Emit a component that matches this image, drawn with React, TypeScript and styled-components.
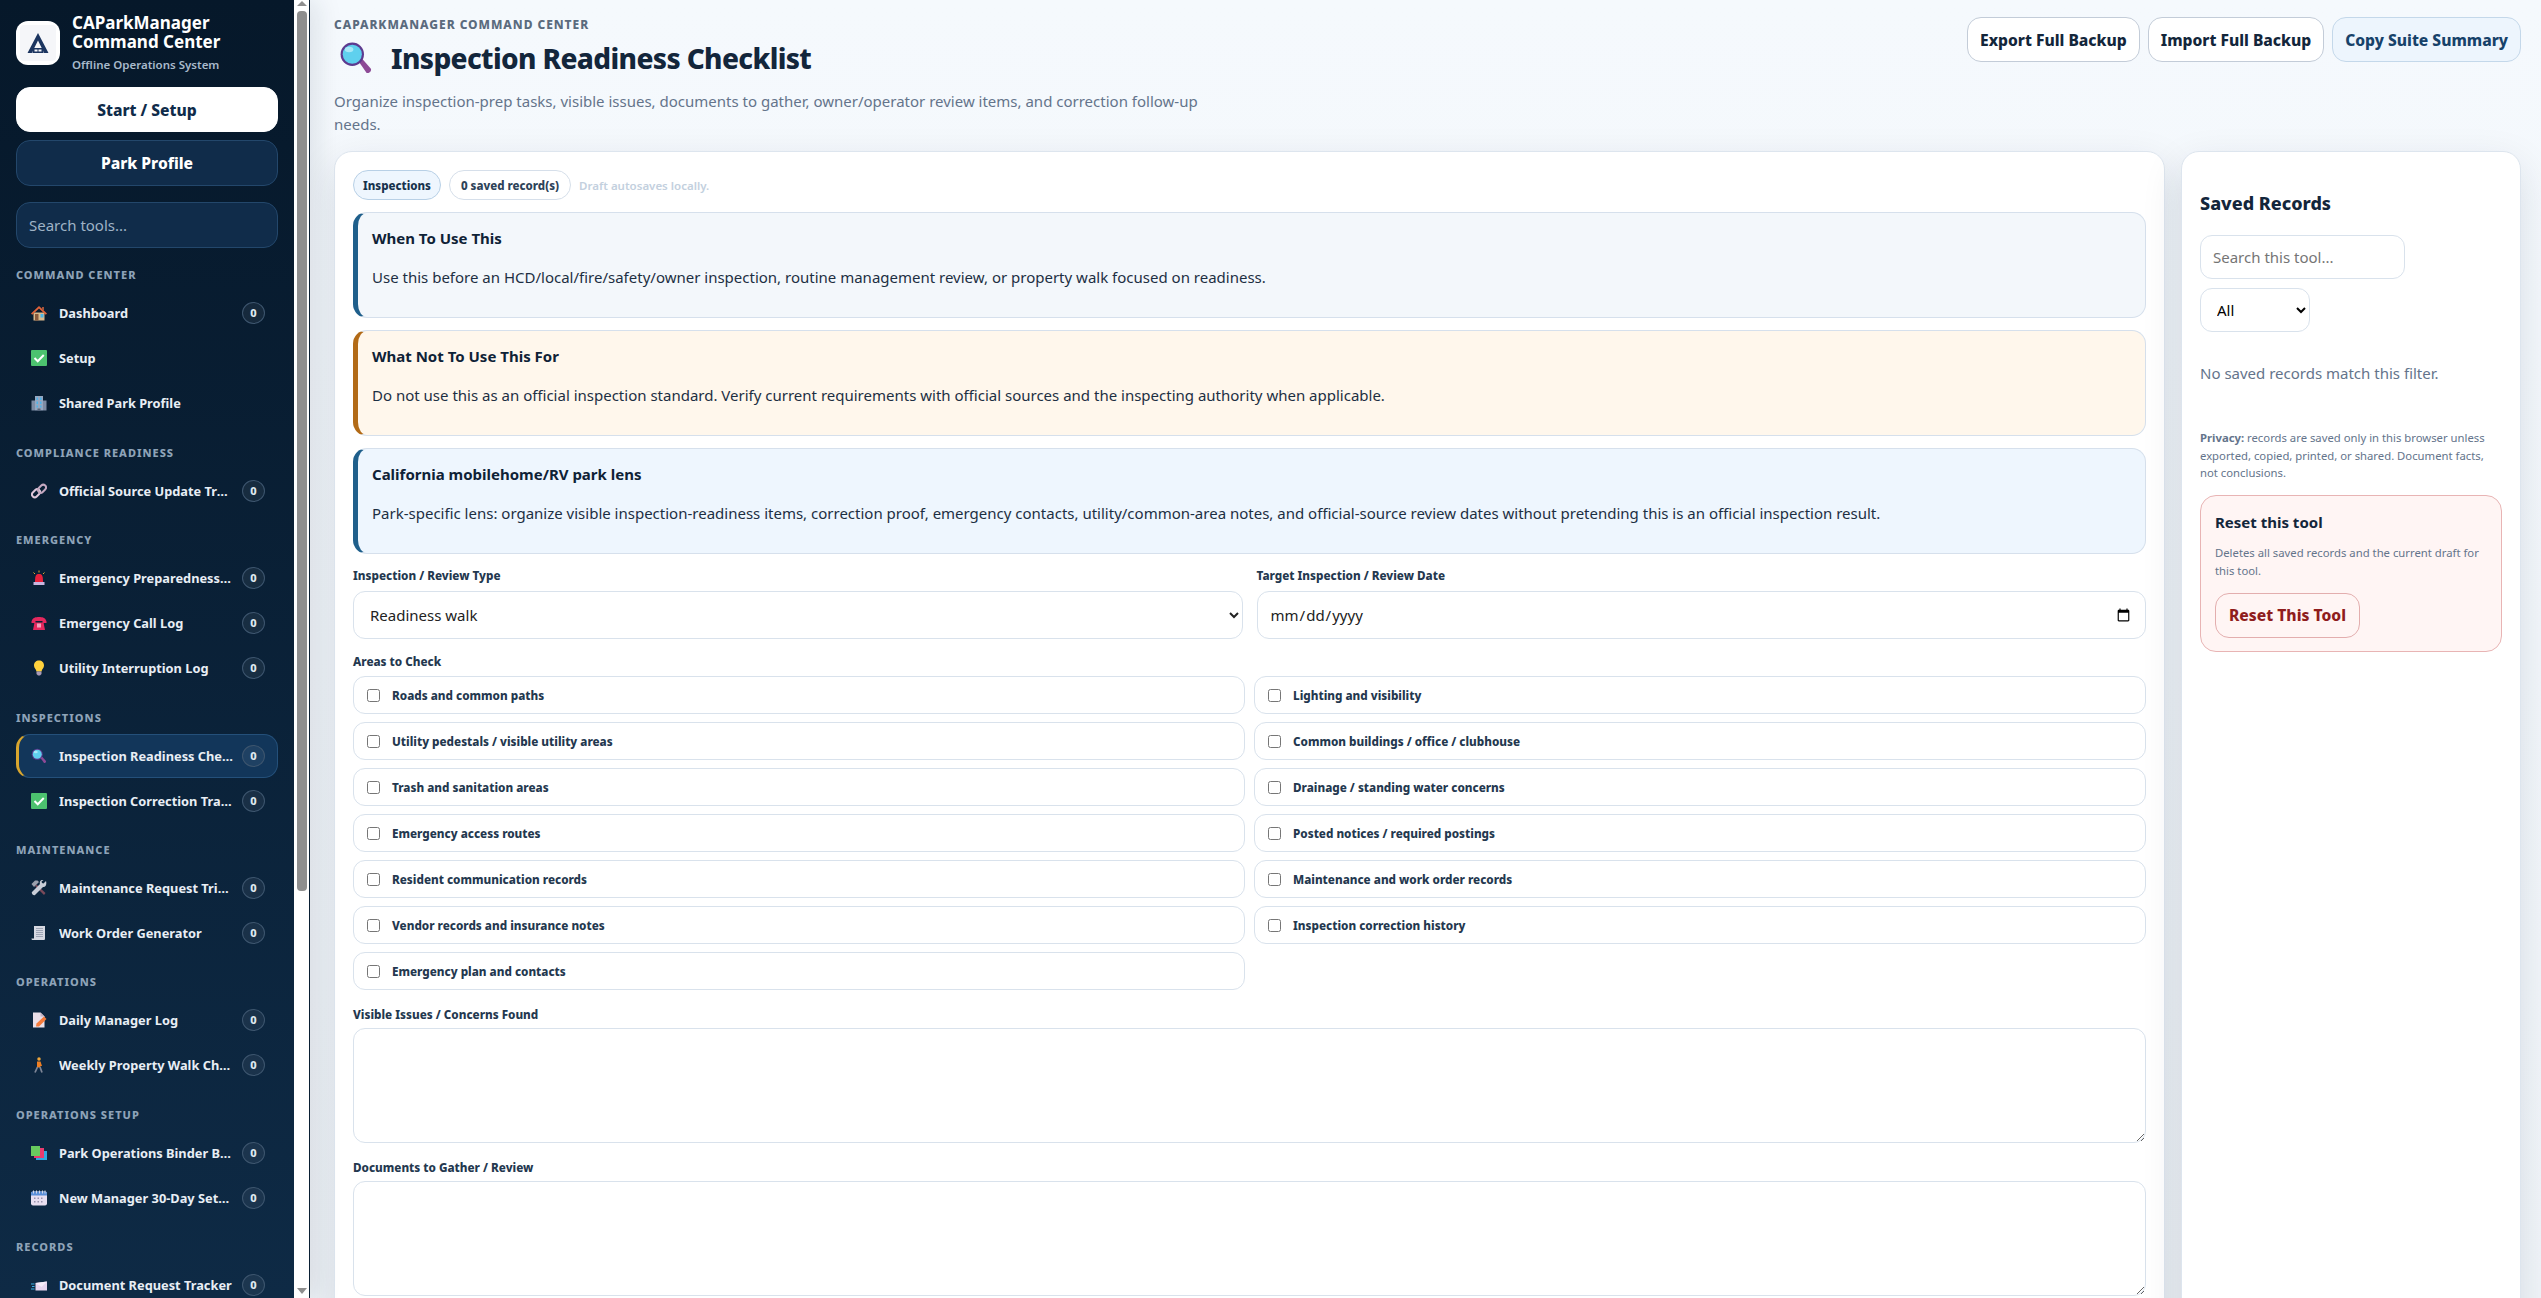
import React from 'react';
import styled, {createGlobalStyle} from 'styled-components';

const GlobalStyle = createGlobalStyle`
  * { box-sizing: border-box; }
  html, body { margin: 0; height: 100%; overflow: hidden; }
  body {
    font-family: "Noto Sans", "Liberation Sans", sans-serif;
    color: #13263b;
    background: #f5f9fd;
  }
  #root { height: 100%; }
`

type IconName = 'house' | 'check' | 'building' | 'link' | 'siren' | 'phone' | 'bulb' | 'lens' | 'tools' | 'receipt' | 'memo' | 'walker' | 'books' | 'calendar' | 'mail';

const Emoji = ({name, size = 16}: {name: IconName; size?: number}) => (
    <svg width={size} height={size} viewBox="0 0 32 32" aria-hidden="true">
        {name === 'house' && <>
            <path d="M5 15h22v16H5z" fill="#d9b98c"/>
            <path d="M16 2 0 17l2.500 2.500L16 7l13.500 12.500L32 17z" fill="#e0633a"/>
            <path d="M22 4h4v8l-4-3.500z" fill="#a5543a"/>
            <path d="M8 18h7v13H8z" fill="#8a5a3c"/>
            <path d="M19 18h6v7h-6z" fill="#49b6e8"/>
        </>}
        {name === 'check' && <>
            <rect x="0" y="0" width="32" height="32" rx="2" fill="#4cc26f"/>
            <path d="m7 16 6.500 6.500L25.500 10" fill="none" stroke="#fff" strokeWidth="4"/>
        </>}
        {name === 'building' && <>
            <path d="M1 11h7v20H1zM24 11h7v20h-7z" fill="#7d8ba3"/>
            <path d="M8 2h16v29H8z" fill="#96a7c0"/>
            <path d="M11 5h3v5h-3zM18 5h3v5h-3zM11 13h3v5h-3zM18 13h3v5h-3zM11 21h3v4h-3zM18 21h3v4h-3z" fill="#4db4ea"/>
            <path d="M13 27h6v4h-6z" fill="#5a6578"/>
        </>}
        {name === 'link' && <>
            <rect x="1" y="15" width="18" height="11" rx="5.500" transform="rotate(-45 10 20.500)" fill="none" stroke="#e0c8dc" strokeWidth="4"/>
            <rect x="13" y="6" width="18" height="11" rx="5.500" transform="rotate(-45 22 11.500)" fill="none" stroke="#c4a8c0" strokeWidth="4"/>
        </>}
        {name === 'siren' && <>
            <path d="M8 24c0-14 2-16 8-16s8 2 8 16z" fill="#e8213b"/>
            <path d="M5 24h22v6H5z" fill="#c8b5e0"/>
            <path d="M16 1v4M5 5l3 3M27 5l-3 3" stroke="#e0a92f" strokeWidth="2"/>
        </>}
        {name === 'phone' && <>
            <path d="M1 13C3 5 10 4 16 4s13 1 15 9v3h-8v-4H9v4H1z" fill="#e4285e"/>
            <path d="M7 15h18l3 15H4z" fill="#e4285e"/>
            <rect x="12" y="17" width="8" height="8" fill="#f2a2bb"/>
        </>}
        {name === 'bulb' && <>
            <path d="M16 1c6 0 10 4 10 10 0 5-4 7-5 12H11c-1-5-5-7-5-12C6 5 10 1 16 1z" fill="#ffd23d"/>
            <path d="M11 23h10v5l-3 3h-4l-3-3z" fill="#a89bb8"/>
        </>}
        {name === 'lens' && <>
            <path d="m19 20 3-3 8 9c1 2-2 5-4 4z" fill="#8d4a96"/>
            <circle cx="12.500" cy="12.500" r="11" fill="#5d3a8f"/>
            <circle cx="12.500" cy="12.500" r="9" fill="#5fd0ee"/>
            <ellipse cx="9.500" cy="8" rx="4" ry="2.500" fill="#a8e8f7"/>
        </>}
        {name === 'tools' && <>
            <path d="M11 9 29 26l-3 4L8 12z" fill="#7a4a5a"/>
            <path d="M1 8 8 1h5l3 3-10 10z" fill="#9aa0ad"/>
            <path d="M30 2l-5 5-3-1-1-3 4-3c-5-1-9 3-7 8L2 24c-2 3 3 8 6 6L24 14c5 1 8-5 6-12z" fill="#c9ced8"/>
        </>}
        {name === 'receipt' && <>
            <path d="M6 2h22v25c0 2-1 3-3 3H4c-2 0-3-1-3-3h5z" fill="#d6d9e2"/>
            <path d="M10 7h14M10 11h14M10 15h14M10 19h14M10 23h14" stroke="#8b93a5" strokeWidth="1.500"/>
        </>}
        {name === 'memo' && <>
            <path d="M4 1h15l8 8v22H4z" fill="#eadfe8"/>
            <path d="M19 1v8h8z" fill="#c3b1c2"/>
            <path d="m10 29 1-6 15-14 5 5-15 15z" fill="#f47b3b"/>
        </>}
        {name === 'walker' && <>
            <circle cx="16" cy="4" r="3.500" fill="#f0a63a"/>
            <path d="M12 9h7l3 9h-3v3h-7z" fill="#ef7f22"/>
            <path d="M13 20 8 31M18 20l4 11" stroke="#7d8596" strokeWidth="3.500"/>
        </>}
        {name === 'books' && <>
            <path d="M10 12h22v18H10z" fill="#2fa6df"/>
            <path d="M6 6h20v20H6z" fill="#e93b6e"/>
            <path d="M0 2h18v20H0z" fill="#68cb5e"/>
        </>}
        {name === 'calendar' && <>
            <rect x="0" y="3" width="32" height="28" rx="4" fill="#e9dff0"/>
            <path d="M0 7a4 4 0 0 1 4-4h24a4 4 0 0 1 4 4v4H0z" fill="#5a8fd8"/>
            <path d="M5 1v6M11 1v6M17 1v6M23 1v6M28 1v6" stroke="#d5d8e6" strokeWidth="2"/>
            <path d="M6 15h3v3H6zM13 15h3v3h-3zM20 15h3v3h-3zM6 22h3v3H6zM13 22h3v3h-3zM20 22h3v3h-3z" fill="#9a93ad"/>
        </>}
        {name === 'mail' && <>
            <path d="M9 12 32 9v18H9z" fill="#e7d6ef"/>
            <path d="m9 12 12 8L32 9z" fill="#f6edf9"/>
            <path d="M0 14h7M2 19h5M0 24h7" stroke="#3ab0e6" strokeWidth="2"/>
        </>}
    </svg>
);

const LogoMark = () => (
    <svg width="36" height="36" viewBox="0 0 36 36" aria-hidden="true">
        <rect width="36" height="36" rx="4" fill="#f5f6f9"/>
        <path d="M18 8 7.500 28h4.300L18 15.500 24.200 28h4.300z" fill="#1c3560"/>
        <path d="M12.500 23h11v5h-11z" fill="#1c3560"/>
        <path d="M14.500 24.500h3v2h-3zM18.500 24.500h3v2h-3z" fill="#f5f6f9"/>
    </svg>
);

const navSections: {title: string; items: {icon: IconName; label: string; badge?: boolean; active?: boolean}[]}[] = [
    {title: 'Command Center', items: [
        {icon: 'house', label: 'Dashboard', badge: true},
        {icon: 'check', label: 'Setup'},
        {icon: 'building', label: 'Shared Park Profile'},
    ]},
    {title: 'Compliance Readiness', items: [
        {icon: 'link', label: 'Official Source Update Tracker', badge: true},
    ]},
    {title: 'Emergency', items: [
        {icon: 'siren', label: 'Emergency Preparedness Checklist', badge: true},
        {icon: 'phone', label: 'Emergency Call Log', badge: true},
        {icon: 'bulb', label: 'Utility Interruption Log', badge: true},
    ]},
    {title: 'Inspections', items: [
        {icon: 'lens', label: 'Inspection Readiness Checklist', badge: true, active: true},
        {icon: 'check', label: 'Inspection Correction Tracker', badge: true},
    ]},
    {title: 'Maintenance', items: [
        {icon: 'tools', label: 'Maintenance Request Triage', badge: true},
        {icon: 'receipt', label: 'Work Order Generator', badge: true},
    ]},
    {title: 'Operations', items: [
        {icon: 'memo', label: 'Daily Manager Log', badge: true},
        {icon: 'walker', label: 'Weekly Property Walk Checklist', badge: true},
    ]},
    {title: 'Operations Setup', items: [
        {icon: 'books', label: 'Park Operations Binder Builder', badge: true},
        {icon: 'calendar', label: 'New Manager 30-Day Setup', badge: true},
    ]},
    {title: 'Records', items: [
        {icon: 'mail', label: 'Document Request Tracker', badge: true},
    ]},
];

const areas = [
    'Roads and common paths', 'Lighting and visibility',
    'Utility pedestals / visible utility areas', 'Common buildings / office / clubhouse',
    'Trash and sanitation areas', 'Drainage / standing water concerns',
    'Emergency access routes', 'Posted notices / required postings',
    'Resident communication records', 'Maintenance and work order records',
    'Vendor records and insurance notes', 'Inspection correction history',
    'Emergency plan and contacts',
];

export default function App() {
    return (
        <Shell>
            <GlobalStyle/>
            <Aside>
                <SideContent>
                    <Brand>
                        <LogoBox><LogoMark/></LogoBox>
                        <BrandText>
                            <BrandName>CAParkManager Command Center</BrandName>
                            <BrandSub>Offline Operations System</BrandSub>
                        </BrandText>
                    </Brand>
                    <SideButton $primary>Start / Setup</SideButton>
                    <SideButton>Park Profile</SideButton>
                    <SideSearch placeholder="Search tools..."/>
                    {navSections.map(section => (
                        <NavSection key={section.title}>
                            <NavHeading>{section.title}</NavHeading>
                            {section.items.map(item => (
                                <NavItem key={item.label} $active={item.active}>
                                    <NavIcon><Emoji name={item.icon}/></NavIcon>
                                    <NavLabel>{item.label}</NavLabel>
                                    {item.badge && <Badge>0</Badge>}
                                </NavItem>
                            ))}
                        </NavSection>
                    ))}
                </SideContent>
                <ScrollRail>
                    <ArrowUp/>
                    <Thumb/>
                    <ArrowDown/>
                </ScrollRail>
            </Aside>
            <Main>
                <Header>
                    <HeaderText>
                        <Eyebrow>CAParkManager Command Center</Eyebrow>
                        <Title><Emoji name="lens" size={34}/>Inspection Readiness Checklist</Title>
                        <Subtitle>Organize inspection-prep tasks, visible issues, documents to gather, owner/operator review items, and correction follow-up needs.</Subtitle>
                    </HeaderText>
                    <HeaderActions>
                        <ActionButton>Export Full Backup</ActionButton>
                        <ActionButton>Import Full Backup</ActionButton>
                        <ActionButton $accent>Copy Suite Summary</ActionButton>
                    </HeaderActions>
                </Header>
                <Columns>
                    <ToolCard>
                        <PillRow>
                            <Pill $accent>Inspections</Pill>
                            <Pill>0 saved record(s)</Pill>
                            <DraftNote>Draft autosaves locally.</DraftNote>
                        </PillRow>
                        <Callouts>
                            <Callout $tone="info">
                                <CalloutTitle>When To Use This</CalloutTitle>
                                <CalloutBody>Use this before an HCD/local/fire/safety/owner inspection, routine management review, or property walk focused on readiness.</CalloutBody>
                            </Callout>
                            <Callout $tone="warn">
                                <CalloutTitle>What Not To Use This For</CalloutTitle>
                                <CalloutBody>Do not use this as an official inspection standard. Verify current requirements with official sources and the inspecting authority when applicable.</CalloutBody>
                            </Callout>
                            <Callout $tone="lens">
                                <CalloutTitle>California mobilehome/RV park lens</CalloutTitle>
                                <CalloutBody>Park-specific lens: organize visible inspection-readiness items, correction proof, emergency contacts, utility/common-area notes, and official-source review dates without pretending this is an official inspection result.</CalloutBody>
                            </Callout>
                        </Callouts>
                        <TwoFields>
                            <Field>
                                <FieldLabel>Inspection / Review Type</FieldLabel>
                                <WideSelect defaultValue="Readiness walk">
                                    <option>Readiness walk</option>
                                </WideSelect>
                            </Field>
                            <Field>
                                <FieldLabel>Target Inspection / Review Date</FieldLabel>
                                <DateInput type="date"/>
                            </Field>
                        </TwoFields>
                        <AreasBlock>
                            <FieldLabel>Areas to Check</FieldLabel>
                            <CheckGrid>
                                {areas.map(area => (
                                    <CheckRow key={area}>
                                        <input type="checkbox"/>
                                        <span>{area}</span>
                                    </CheckRow>
                                ))}
                            </CheckGrid>
                        </AreasBlock>
                        <Block>
                            <FieldLabel>Visible Issues / Concerns Found</FieldLabel>
                            <NotesArea/>
                        </Block>
                        <Block>
                            <FieldLabel>Documents to Gather / Review</FieldLabel>
                            <NotesArea/>
                        </Block>
                    </ToolCard>
                    <SideCard>
                        <SideTitle>Saved Records</SideTitle>
                        <ToolSearch placeholder="Search this tool..."/>
                        <FilterSelect defaultValue="All">
                            <option>All</option>
                        </FilterSelect>
                        <EmptyText>No saved records match this filter.</EmptyText>
                        <Privacy><b>Privacy:</b> records are saved only in this browser unless exported, copied, printed, or shared. Document facts, not conclusions.</Privacy>
                        <ResetBox>
                            <ResetTitle>Reset this tool</ResetTitle>
                            <ResetText>Deletes all saved records and the current draft for this tool.</ResetText>
                            <ResetButton>Reset This Tool</ResetButton>
                        </ResetBox>
                    </SideCard>
                </Columns>
            </Main>
        </Shell>
    );
}

const Shell = styled.div`
  display: flex;
  height: 100%;
  overflow: hidden;
`
const Aside = styled.aside`
  width: 310px;
  flex-shrink: 0;
  display: flex;
  height: 100%;
  border-right: 1px solid #0a1f33;
  box-shadow: 8px 0 24px rgba(15, 35, 60, 0.1);
  position: relative;
  z-index: 1;
`
const SideContent = styled.div`
  width: 294px;
  height: 100%;
  overflow: hidden;
  padding: 13px 16px 0;
  background: linear-gradient(180deg, #06182a 0%, #0e2a45 100%);
`
const Brand = styled.div`
  display: flex;
  align-items: center;
  gap: 12px;
  margin-bottom: 14px;
`
const LogoBox = styled.div`
  width: 44px;
  height: 44px;
  flex-shrink: 0;
  border-radius: 12px;
  background: #fff;
  display: flex;
  align-items: center;
  justify-content: center;
`
const BrandText = styled.div`
  display: flex;
  flex-direction: column;
`
const BrandName = styled.div`
  font-size: 17px;
  font-weight: 700;
  line-height: 19px;
  color: #fff;
  width: 170px;
`
const BrandSub = styled.div`
  font-size: 11.5px;
  font-weight: 600;
  line-height: 16px;
  margin-top: 6px;
  color: #a9bacb;
`
const SideButton = styled.button<{$primary?: boolean}>`
  display: block;
  width: 100%;
  height: ${props => props.$primary ? '45px' : '46px'};
  margin-bottom: 8px;
  border-radius: 14px;
  border: 1px solid ${props => props.$primary ? '#fff' : '#23476b'};
  background: ${props => props.$primary ? '#fff' : '#102c4a'};
  color: ${props => props.$primary ? '#102c4a' : '#fff'};
  font-family: inherit;
  font-size: 15.6px;
  font-weight: 800;
`
const SideSearch = styled.input`
  display: block;
  width: 100%;
  height: 46px;
  margin-top: 16px;
  padding: 0 12px;
  border-radius: 14px;
  border: 1px solid #23476b;
  background: #102c4a;
  font-family: inherit;
  font-size: 15px;
  color: #fff;
  &::placeholder { color: #9fb3c6; opacity: 1; }
`
const NavSection = styled.div`
  margin-top: 20.4px;
`
const NavHeading = styled.div`
  font-size: 11px;
  font-weight: 800;
  line-height: 14px;
  letter-spacing: 1px;
  text-transform: uppercase;
  color: #8ea3b8;
  margin-bottom: 9px;
`
const NavItem = styled.div<{$active?: boolean}>`
  position: relative;
  display: flex;
  align-items: center;
  height: 44px;
  margin-bottom: 1px;
  padding: 0 12px;
  border-radius: 14px;
  border: 1px solid ${props => props.$active ? '#24507a' : 'transparent'};
  border-left: 3px solid ${props => props.$active ? '#d9a62e' : 'transparent'};
  background: ${props => props.$active ? '#12365a' : 'transparent'};
`
const NavIcon = styled.span`
  width: 16px;
  height: 16px;
  flex-shrink: 0;
  margin-right: 12px;
  display: flex;
`
const NavLabel = styled.span`
  flex: 1;
  min-width: 0;
  overflow: hidden;
  white-space: nowrap;
  text-overflow: ellipsis;
  font-size: 12.8px;
  font-weight: 700;
  color: #e8eef5;
`
const Badge = styled.span`
  width: 23px;
  height: 22px;
  flex-shrink: 0;
  margin-left: 8px;
  border-radius: 50%;
  border: 1px solid #3d556e;
  background: rgba(255, 255, 255, 0.06);
  color: #dfe7ef;
  font-size: 11px;
  font-weight: 800;
  line-height: 20px;
  text-align: center;
`
const ScrollRail = styled.div`
  width: 15px;
  height: 100%;
  background: #fff;
  display: flex;
  flex-direction: column;
  align-items: center;
`
const ArrowUp = styled.div`
  width: 0;
  height: 0;
  margin-top: 1px;
  border-left: 5px solid transparent;
  border-right: 5px solid transparent;
  border-bottom: 5px solid #8e8e8e;
`
const Thumb = styled.div`
  width: 10px;
  height: 880px;
  margin-top: 5px;
  border-radius: 4px;
  background: #8e8e8e;
`
const ArrowDown = styled.div`
  width: 0;
  height: 0;
  margin-top: auto;
  margin-bottom: 4px;
  border-left: 5px solid transparent;
  border-right: 5px solid transparent;
  border-top: 6px solid #8e8e8e;
`
const Main = styled.main`
  flex: 1;
  min-width: 0;
  height: 100%;
  overflow: hidden;
  padding: 17px 20px 0 24px;
  background: linear-gradient(180deg, #f5f9fd 0%, #f1f5f9 100%);
`
const Header = styled.header`
  display: flex;
  justify-content: space-between;
  align-items: flex-start;
  margin-bottom: 15px;
`
const HeaderText = styled.div`
  max-width: 880px;
`
const Eyebrow = styled.div`
  font-size: 12px;
  font-weight: 800;
  line-height: 16px;
  letter-spacing: 0.95px;
  text-transform: uppercase;
  color: #5b6b7e;
`
const Title = styled.h1`
  display: flex;
  align-items: center;
  gap: 18px;
  margin: 6px 0 0 5px;
  font-size: 28px;
  font-weight: 800;
  line-height: 38px;
  letter-spacing: -0.63px;
  color: #13263b;
`
const Subtitle = styled.p`
  margin: 13px 0 0;
  font-size: 15px;
  line-height: 23px;
  color: #64748b;
`
const HeaderActions = styled.div`
  display: flex;
  gap: 8px;
`
const ActionButton = styled.button<{$accent?: boolean}>`
  height: 45px;
  padding: 0 12px;
  border-radius: 14px;
  border: 1px solid ${props => props.$accent ? '#c4d8ea' : '#c3ccd8'};
  background: ${props => props.$accent ? '#edf5fd' : '#fff'};
  color: ${props => props.$accent ? '#17426a' : '#13263b'};
  font-family: inherit;
  font-size: 15.6px;
  font-weight: 800;
`
const Columns = styled.div`
  display: grid;
  grid-template-columns: minmax(0, 1fr) 340px;
  gap: 16px;
  height: 1400px;
`
const Card = styled.section`
  background: #fff;
  border: 1px solid #dde5ee;
  border-radius: 18px;
  box-shadow: 0 14px 40px rgba(15, 35, 60, 0.12);
`
const ToolCard = styled(Card)`
  padding: 18px;
`
const SideCard = styled(Card)`
  padding: 39px 18px 18px;
`
const PillRow = styled.div`
  display: flex;
  align-items: center;
  gap: 8px;
  margin-bottom: 12px;
`
const Pill = styled.span<{$accent?: boolean}>`
  height: 30px;
  padding: 0 ${props => props.$accent ? '9px' : '11px'};
  display: flex;
  align-items: center;
  border-radius: 15px;
  border: 1px solid ${props => props.$accent ? '#b8d0e6' : '#d6dfea'};
  background: ${props => props.$accent ? '#eef6fe' : '#fff'};
  color: ${props => props.$accent ? '#17324d' : '#2e4359'};
  font-size: 11.5px;
  font-weight: 800;
`
const DraftNote = styled.span`
  font-size: 11.5px;
  font-weight: 600;
  color: #c3d0de;
`
const Callouts = styled.div`
  display: flex;
  flex-direction: column;
  gap: 12px;
`
const toneBg = {info: '#f3f7fb', warn: '#fff7ec', lens: '#eef6fe'};
const toneEdge = {info: '#1f5f8b', warn: '#b26a16', lens: '#1f5f8b'};
const Callout = styled.div<{$tone: 'info' | 'warn' | 'lens'}>`
  height: 106px;
  padding: 15px 18px 0 14px;
  border-radius: 14px;
  border: 1px solid #d6e0ec;
  border-left: 5px solid ${props => toneEdge[props.$tone]};
  background: ${props => toneBg[props.$tone]};
`
const CalloutTitle = styled.h3`
  margin: 0 0 19px;
  font-size: 15px;
  font-weight: 700;
  line-height: 20px;
  color: #0f2236;
`
const CalloutBody = styled.p`
  margin: 0;
  font-size: 15px;
  line-height: 20px;
  color: #1d2f43;
`
const TwoFields = styled.div`
  display: grid;
  grid-template-columns: 1fr 1fr;
  gap: 14px;
  margin-top: 13px;
`
const Field = styled.div`
  min-width: 0;
`
const FieldLabel = styled.label`
  display: block;
  margin-bottom: 7px;
  font-size: 11.7px;
  font-weight: 800;
  line-height: 16px;
  color: #24384f;
`
const inputLook = `
  border: 1px solid #d9e2ec;
  border-radius: 12px;
  background: #fff;
  font-family: inherit;
  font-size: 15px;
`
const WideSelect = styled.select`
  ${inputLook}
  display: block;
  width: 100%;
  height: 48px;
  margin-top: 8px;
  padding: 0 12px;
  color: #222;
`
const DateInput = styled.input`
  ${inputLook}
  display: block;
  width: 100%;
  height: 48px;
  margin-top: 8px;
  padding: 0 12px;
  color: #222;
`
const Block = styled.div`
  margin-top: 16px;
`
const AreasBlock = styled(Block)`
  margin-top: 14px;
`
const CheckGrid = styled.div`
  display: grid;
  grid-template-columns: 1fr 1fr;
  gap: 8px 9px;
`
const CheckRow = styled.label`
  display: flex;
  align-items: center;
  gap: 12px;
  height: 38px;
  padding: 0 10px 0 13px;
  border: 1px solid #d9e2ec;
  border-radius: 12px;
  font-size: 11.7px;
  font-weight: 800;
  color: #24384f;
  input { margin: 0; }
`
const NotesArea = styled.textarea`
  ${inputLook}
  display: block;
  width: 100%;
  height: 115px;
  margin-top: -1px;
`
const SideTitle = styled.h2`
  margin: 0 0 20px;
  font-size: 18px;
  font-weight: 800;
  line-height: 24px;
  color: #13263b;
`
const ToolSearch = styled.input`
  ${inputLook}
  display: block;
  width: 205px;
  height: 44px;
  padding: 0 12px;
  &::placeholder { color: #757575; opacity: 1; }
`
const FilterSelect = styled.select`
  ${inputLook}
  display: block;
  width: 110px;
  height: 44px;
  margin-top: 9px;
  padding: 0 12px;
  color: #000;
`
const EmptyText = styled.p`
  margin: 31px 0 0;
  font-size: 15px;
  line-height: 20px;
  color: #64748b;
`
const Privacy = styled.p`
  margin: 46px 0 0;
  font-size: 11.3px;
  line-height: 17.5px;
  color: #64748b;
`
const ResetBox = styled.div`
  margin-top: 13px;
  padding: 16.5px 14px 13px;
  border: 1px solid #e8b4b4;
  border-radius: 16px;
  background: #fff5f4;
`
const ResetTitle = styled.h3`
  margin: 0;
  font-size: 15px;
  font-weight: 700;
  line-height: 20px;
  color: #13263b;
`
const ResetText = styled.p`
  margin: 11.5px 0 0;
  font-size: 11.3px;
  line-height: 18px;
  color: #64748b;
`
const ResetButton = styled.button`
  height: 45px;
  margin-top: 13px;
  padding: 0 13px;
  border: 1px solid #e3aeae;
  border-radius: 14px;
  background: #fff5f4;
  color: #8f1d1d;
  font-family: inherit;
  font-size: 15.6px;
  font-weight: 800;
`
